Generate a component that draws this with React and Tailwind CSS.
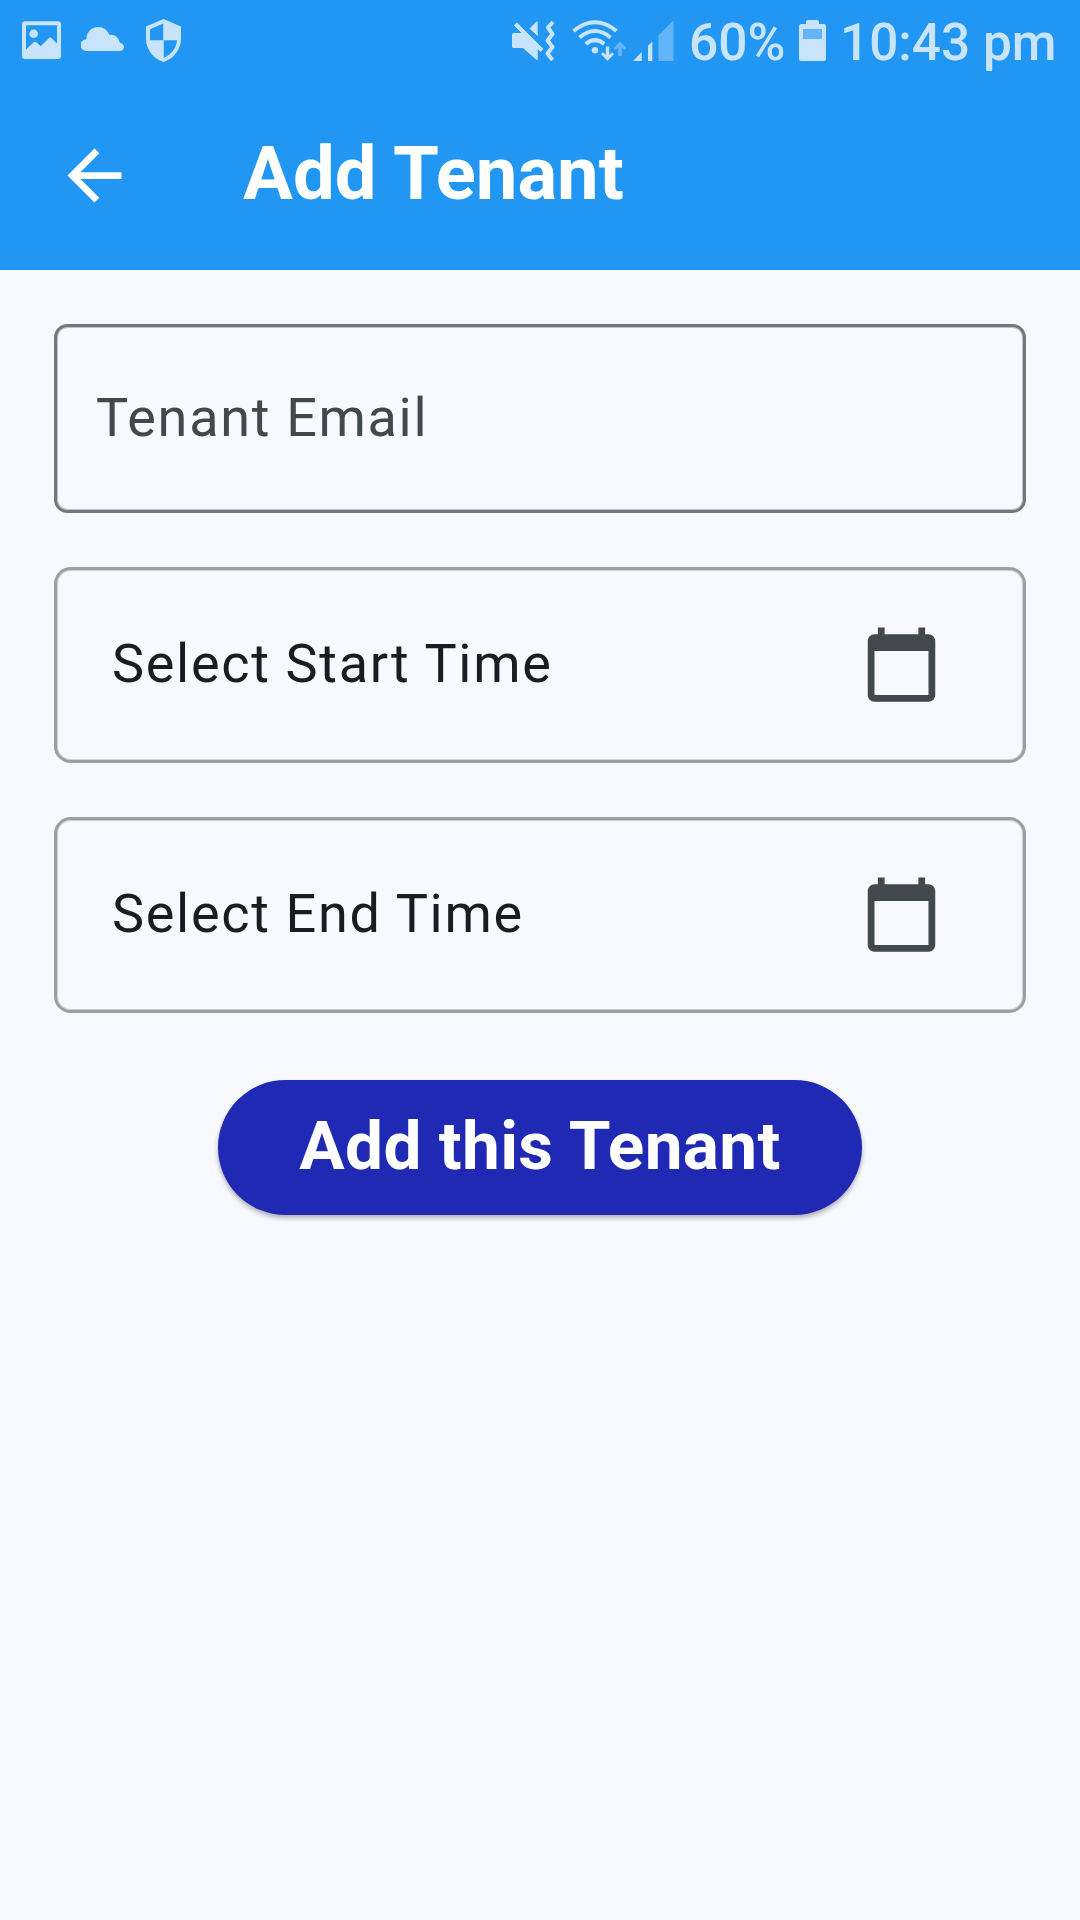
function StatusIcon({ x, width, className = "", children }) {
  return (
    <svg
      viewBox={`${x} 0 ${width} 81`}
      width={width}
      height="81"
      className={`shrink-0 ${className}`}
      fill="currentColor"
      aria-hidden="true"
    >
      {children}
    </svg>
  );
}

function StatusBar() {
  return (
    <div className="flex h-[81px] justify-between pl-[22px] pr-[23px] text-[#c7e4fc]">
      <div className="flex">
        <StatusIcon x={22} width={39} className="mr-5">
          <path
            fillRule="evenodd"
            d="M25 21.3H58a3 3 0 0 1 3 3V56a3 3 0 0 1-3 3H25a3 3 0 0 1-3-3V24.300a3 3 0 0 1 3-3ZM26 25.300V49.500L33.700 42.300Q35 41.200 36.300 42.300L40.700 46.200L48.800 38.200Q50.200 36.800 51.600 38.200L57 43.500V25.300Z"
          />
          <circle cx="33.700" cy="33.700" r="4.300" />
        </StatusIcon>
        <StatusIcon x={81} width={43} className="mr-[22px]">
          <path d="M86.500 51A5.900 5.900 0 0 1 86.300 39.200C86.500 32 91.500 27 98.300 27C103.500 27 107.300 30 109.200 34.800C114.500 33.900 119 37.500 119.800 42.700C122.300 43 124 44.700 124 47C124 49.300 122.300 51 120 51Z" />
        </StatusIcon>
        <StatusIcon x={146} width={35}>
          <path
            fillRule="evenodd"
            d="M163.500 19L181 26.500V39C181 49.500 173.500 59 163.500 62C153.500 59 146 49.500 146 39V26.500ZM163.200 23.500L150 29.200V40.200H163.200ZM163.800 40.200V57.800C171 55 176.300 48 177 40.200Z"
          />
        </StatusIcon>
      </div>
      <div className="flex">
        <StatusIcon x={511} width={45} className="mr-4">
          <path d="M513.500 33H523L537.700 47.500V59Q537.700 61 536 59.500L523 48H513.500Q512 48 512 46.500V34.500Q512 33 513.500 33ZM537.700 22V36.300L529.500 28.600L536 22.100Q537.700 20.500 537.700 22Z" />
          <path
            d="M515.500 24L542 50.500"
            fill="none"
            stroke="currentColor"
            strokeWidth="4"
          />
          <path
            d="M553 22L548 27.500L552.500 34L547.500 40.500L552.500 47L547.500 53.500L552.500 60"
            fill="none"
            stroke="currentColor"
            strokeWidth="4"
            strokeLinejoin="round"
          />
        </StatusIcon>
        <StatusIcon x={572} width={54} className="mr-[7px]">
          <g fill="none" stroke="currentColor" strokeWidth="4">
            <path d="M573.500 31Q595 13.500 616.500 31" />
            <path d="M579.500 37.500Q595 24.500 610.500 37.500" />
            <path d="M585.800 44Q595 36.300 604.200 44" />
          </g>
          <circle cx="595" cy="50.200" r="3.200" />
          <path d="M605.800 46.500H609.200V55L612 52.300L614 54.300L607.500 60.700L601 54.300L603 52.300L605.800 55Z" />
          <path
            className="text-[#64b5f7]"
            d="M618.200 56V47.500L615.500 50L613.500 48L620 41.500L626.500 48L624.500 50L621.800 47.500V56Z"
          />
        </StatusIcon>
        <StatusIcon x={633} width={41} className="mr-[15px]">
          <path d="M633 61L641.700 52V61ZM648 45.800L652.300 41.500V61H648Z" />
          <path className="text-[#64b5f7]" d="M658.500 35.500L673.500 20.500V61H658.500Z" />
        </StatusIcon>
        <span className="mr-[12px] w-[98px] whitespace-nowrap pt-[13px] text-[51.500px] font-medium leading-[60px]">
          60%
        </span>
        <StatusIcon x={799} width={27} className="mr-[14px]">
          <path
            fillRule="evenodd"
            d="M808 20H817Q819 20 819 22V24H824Q826 24 826 26V59Q826 61 824 61H801Q799 61 799 59V26Q799 24 801 24H806V22Q806 20 808 20ZM803 29V39H822V29Z"
          />
          <path className="text-[#64b5f7]" d="M803 29H822V39H803Z" />
        </StatusIcon>
        <span className="w-[217px] whitespace-nowrap pt-[13px] text-[51.300px] font-medium leading-[60px]">
          10:43 pm
        </span>
      </div>
    </div>
  );
}

function AppBar() {
  return (
    <div className="flex h-[189px] items-center pl-[54px] text-white">
      <svg
        viewBox="0 0 24 24"
        className="size-[81px] shrink-0"
        fill="currentColor"
        aria-hidden="true"
      >
        <path d="M20 11H7.830l5.590-5.590L12 4l-8 8 8 8 1.410-1.410L7.830 13H20v-2z" />
      </svg>
      <h1 className="ml-[108px] pb-[2px] text-[74.250px] font-bold leading-none">
        Add Tenant
      </h1>
    </div>
  );
}

function CalendarIcon() {
  return (
    <svg
      viewBox="0 0 24 24"
      className="size-[81px] shrink-0 text-[#43474e]"
      fill="currentColor"
      aria-hidden="true"
    >
      <path d="M20 3h-1V1h-2v2H7V1H5v2H4c-1.100 0-2 .9-2 2v16c0 1.100.9 2 2 2h16c1.100 0 2-.9 2-2V5c0-1.100-.9-2-2-2zm0 18H4V8h16v13z" />
    </svg>
  );
}

function DateField({ label }) {
  return (
    <button
      type="button"
      className="flex h-[195.750px] items-center justify-between rounded-[16.875px] border-3 border-[#9e9e9e] pl-[55px] pr-[81.375px] text-[54px] leading-none tracking-[1.688px] text-[#191c20] shadow-[inset_0_0_0_1px_rgba(158,158,158,0.45)]"
    >
      <span className="pb-[2px]">{label}</span>
      <CalendarIcon />
    </button>
  );
}

export default function App() {
  return (
    <div className="h-[1920px] w-[1080px] overflow-hidden bg-[#f8f9ff] font-['Roboto',sans-serif]">
      <header className="h-[270px] bg-[#2196f3]">
        <StatusBar />
        <AppBar />
      </header>
      <main className="flex flex-col gap-[54px] p-[54px]">
        <input
          type="email"
          aria-label="Tenant Email"
          placeholder="Tenant Email"
          className="h-[189px] rounded-[13.500px] border-3 border-[#73777f] bg-transparent px-[39px] pb-[2px] text-[54px] tracking-[1.688px] text-[#191c20] shadow-[inset_0_0_0_1px_rgba(115,119,127,0.45)] outline-none placeholder:text-[#43474e] placeholder:opacity-100"
        />
        <DateField label="Select Start Time" />
        <DateField label="Select End Time" />
        <button
          type="button"
          className="mt-[13.500px] flex h-[135px] w-[643.500px] items-center justify-center self-center rounded-full bg-[#1f29b3] pb-[3px] text-[67.500px] font-bold leading-none tracking-[0.338px] text-white shadow-[0_3px_5px_rgba(0,0,0,0.3)]"
        >
          Add this Tenant
        </button>
      </main>
    </div>
  );
}
